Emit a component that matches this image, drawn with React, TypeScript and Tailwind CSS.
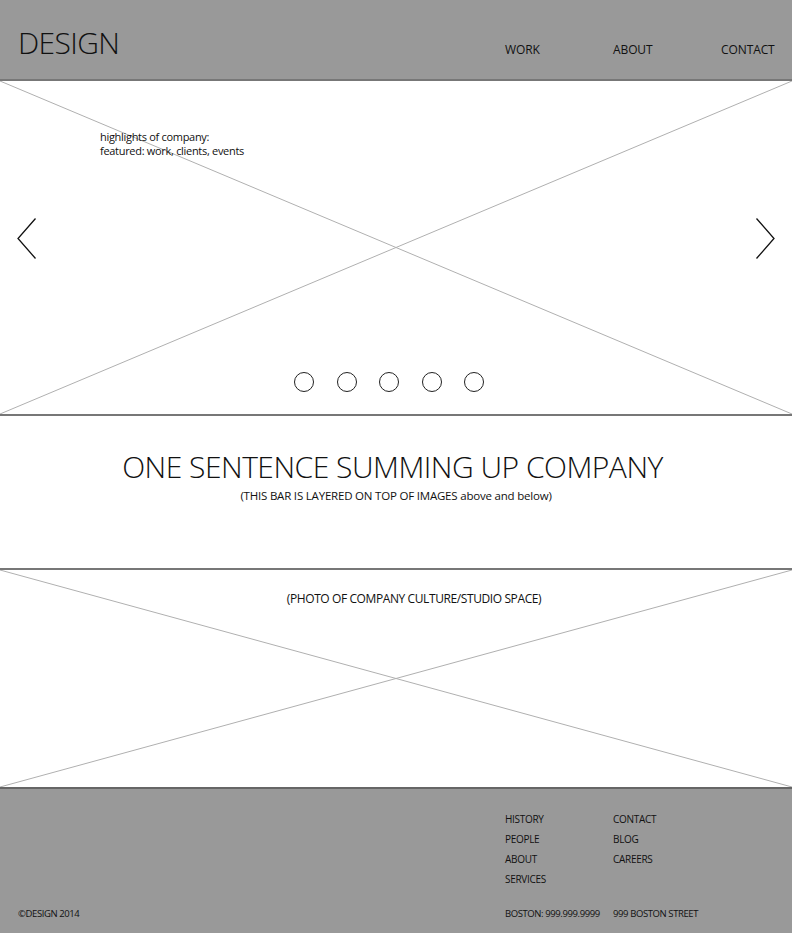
import React from "react";

function Cross() {
  return (
    <svg
      className="absolute inset-0 h-full w-full"
      viewBox="0 0 100 100"
      preserveAspectRatio="none"
    >
      <line x1="0" y1="0" x2="100" y2="100" stroke="#b0b0b0" strokeWidth="1" vectorEffect="non-scaling-stroke" />
      <line x1="100" y1="0" x2="0" y2="100" stroke="#b0b0b0" strokeWidth="1" vectorEffect="non-scaling-stroke" />
    </svg>
  );
}

function Chevron({ dir }: { dir: "left" | "right" }) {
  return (
    <svg width="20" height="41" viewBox="0 0 20 41" className="block">
      {dir === "left" ? (
        <polyline points="18.5,0.5 1,20.5 18.5,40.5" fill="none" stroke="#111" strokeWidth="1.3" />
      ) : (
        <polyline points="1.5,0.5 19,20.5 1.5,40.5" fill="none" stroke="#111" strokeWidth="1.3" />
      )}
    </svg>
  );
}

export default function App() {
  const nav = ["WORK", "ABOUT", "CONTACT"];
  const col1 = ["HISTORY", "PEOPLE", "ABOUT", "SERVICES"];
  const col2 = ["CONTACT", "BLOG", "CAREERS"];

  return (
    <div className="w-[792px] h-[933px] bg-white text-[#111] font-['Open_Sans',sans-serif] overflow-hidden">
      {/* header */}
      <div className="h-[81px] bg-[#999999] border-b-2 border-[#777777] flex items-start">
        <div className="pl-[18px] pt-[25px] text-[30px] leading-[36px] font-light tracking-[-0.6px]">DESIGN</div>
        <div className="ml-auto flex pt-[41px] text-[12px] leading-[18px] tracking-[-0.1px]">
          {nav.map((n, i) => (
            <div key={i} className={i === 2 ? "w-[71px]" : "w-[108px]"}>
              {n}
            </div>
          ))}
        </div>
      </div>

      {/* hero */}
      <div className="relative h-[335px] border-b-2 border-[#777777]">
        <Cross />
        <div className="relative flex h-full flex-col">
          <div className="pl-[100px] pt-[49px] text-[11px] leading-[14px] tracking-[-0.3px]">
            <div>highlights of company:</div>
            <div>featured: work, clients, events</div>
          </div>
          <div className="mt-[60px] flex justify-between px-[17px]">
            <Chevron dir="left" />
            <Chevron dir="right" />
          </div>
          <div className="mt-[113px] flex justify-center gap-[22.5px] pr-[14px]">
            {[0, 1, 2, 3, 4].map((i) => (
              <div key={i} className="h-[20px] w-[20px] rounded-full border-[1.5px] border-[#222]" />
            ))}
          </div>
        </div>
      </div>

      {/* tagline band */}
      <div className="h-[154px] border-b-2 border-[#777777] flex flex-col items-center pt-[33px]">
        <div className="pr-[7px] text-[30px] leading-[36px] font-light tracking-[-0.5px]">ONE SENTENCE SUMMING UP COMPANY</div>
        <div className="mt-[5px] text-[11.5px] leading-[12px] tracking-[-0.2px]">
          (THIS BAR IS LAYERED ON TOP OF IMAGES above and below)
        </div>
      </div>

      {/* photo */}
      <div className="relative h-[217px]">
        <Cross />
        <div className="relative pl-[36px] pt-[21px] text-center text-[12px] leading-[16px] tracking-[-0.4px]">
          (PHOTO OF COMPANY CULTURE/STUDIO SPACE)
        </div>
      </div>

      {/* footer */}
      <div className="h-[146px] bg-[#999999] border-t-2 border-[#666666] flex flex-col text-[10px] leading-[20px] tracking-[-0.3px]">
        <div className="flex pl-[505px] pt-[20px]">
          <div className="w-[108px]">
            {col1.map((c) => (
              <div key={c}>{c}</div>
            ))}
          </div>
          <div>
            {col2.map((c) => (
              <div key={c}>{c}</div>
            ))}
          </div>
        </div>
        <div className="mt-auto mb-[9px] flex text-[9.5px] tracking-[-0.4px]">
          <div className="w-[505px] pl-[18px]">©DESIGN 2014</div>
          <div className="w-[108px]">BOSTON: 999.999.9999</div>
          <div>999 BOSTON STREET</div>
        </div>
      </div>
    </div>
  );
}
